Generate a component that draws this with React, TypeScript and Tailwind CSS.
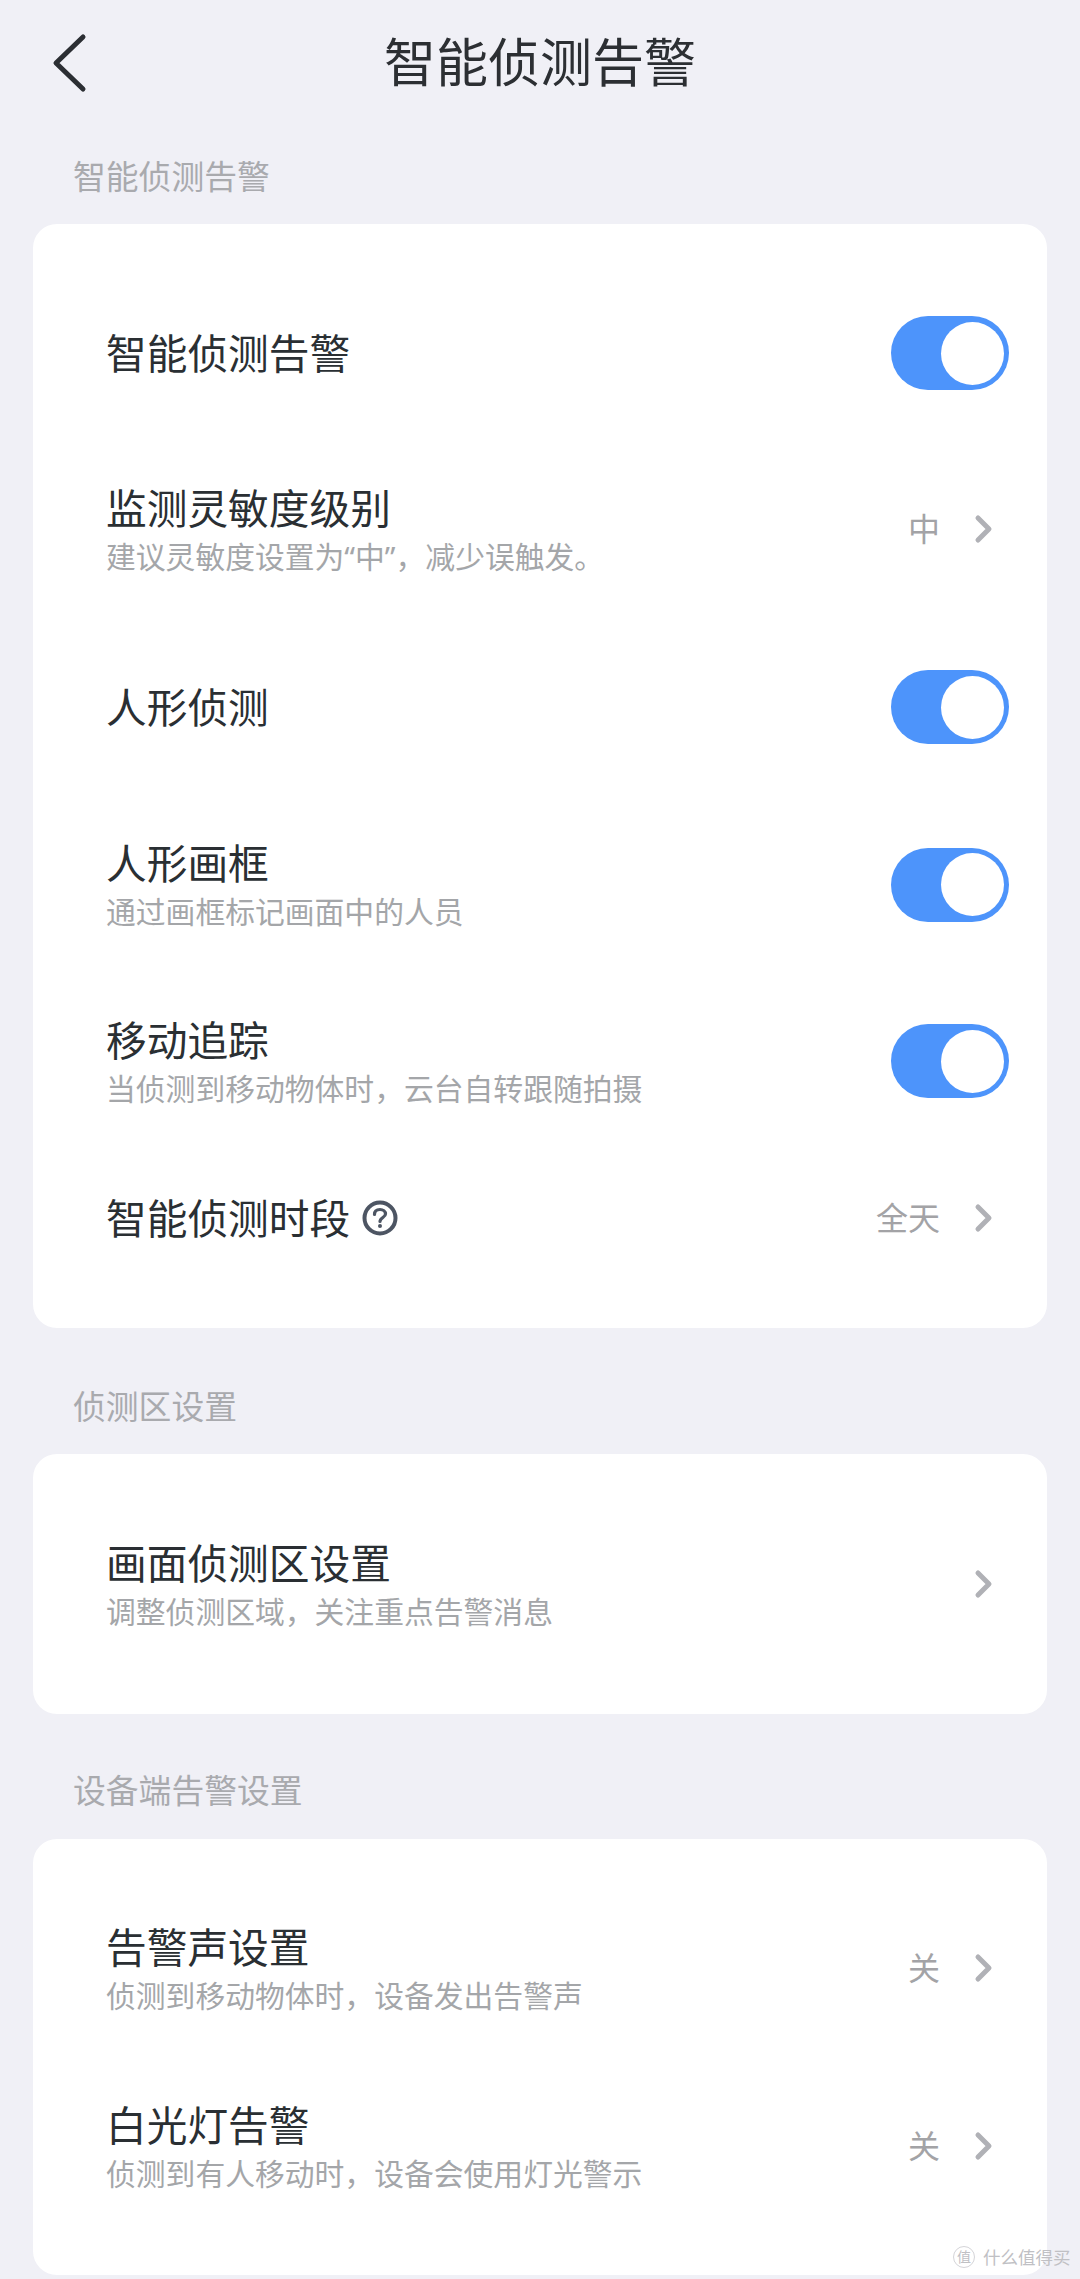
import React from "react";

const FONT = "font-['Noto_Sans','Noto_Sans_CJK_SC',sans-serif]";

function Toggle() {
	return (
		<div className="mr-[5px] flex h-[74px] w-[118px] items-center justify-end rounded-full bg-[#4d94fb] pr-[5px]">
			<div className="h-[63px] w-[63px] rounded-full bg-white" />
		</div>
	);
}

function Chevron() {
	return (
		<svg width="22" height="32" viewBox="0 0 22 32" fill="none">
			<path
				d="M5 5 L16 16 L5 27"
				stroke="#b0b1b6"
				strokeWidth="5"
				strokeLinecap="round"
				strokeLinejoin="round"
			/>
		</svg>
	);
}

function HelpIcon() {
	return (
		<svg width="36" height="36" viewBox="0 0 36 36" fill="none">
			<circle cx="18" cy="18" r="15.5" stroke="#4d5563" strokeWidth="4" />
			<path
				d="M12.5 14.5 C12.5 11 15 9.5 18 9.5 C21 9.5 23.5 11.2 23.5 14 C23.5 17.5 18 17.5 18 21.5"
				stroke="#4d5563"
				strokeWidth="3.2"
				strokeLinecap="round"
			/>
			<circle cx="18" cy="26" r="2" fill="#4d5563" />
		</svg>
	);
}

function RowText({ title, sub, help }: { title: string; sub?: string; help?: boolean }) {
	return (
		<div className={sub ? "flex flex-col pt-[3px]" : "flex flex-col"}>
			<div className="flex items-center">
				<span className="text-[40.7px] leading-[52px] text-[#2a2f33]">{title}</span>
				{help && (
					<span className="ml-[12px] flex">
						<HelpIcon />
					</span>
				)}
			</div>
			{sub && <span className="text-[29.8px] leading-[46px] text-[#a4a6a9]">{sub}</span>}
		</div>
	);
}

function Value({ text }: { text?: string }) {
	return (
		<div className="flex items-center">
			{text && <span className="text-[32px] leading-[40px] text-[#a3a3a6]">{text}</span>}
			<span className="mr-[19px] ml-[33px] flex">
				<Chevron />
			</span>
		</div>
	);
}

function Row({
	height,
	title,
	sub,
	help,
	value,
	toggle,
}: {
	height: string;
	title: string;
	sub?: string;
	help?: boolean;
	value?: string;
	toggle?: boolean;
}) {
	return (
		<div className={`flex items-center justify-between pr-[33px] pl-[73px] ${height}`}>
			<RowText title={title} sub={sub} help={help} />
			{toggle ? <Toggle /> : <Value text={value} />}
		</div>
	);
}

function SectionLabel({ text }: { text: string }) {
	return <div className="pl-[40px] text-[32.8px] leading-[48px] text-[#a9aaae]">{text}</div>;
}

export default function App() {
	return (
		<div className={`relative h-[2279px] w-[1080px] overflow-hidden bg-[#f0f0f6] ${FONT}`}>
			<header className="relative flex h-[124px] items-center justify-center">
				<svg className="absolute top-[33px] left-[50px]" width="38" height="60" viewBox="0 0 38 60" fill="none">
					<path
						d="M33 4 L6 30 L33 56"
						stroke="#2b2e33"
						strokeWidth="5"
						strokeLinecap="round"
						strokeLinejoin="round"
					/>
				</svg>
				<h1 className="text-[52px] leading-[64px] font-normal text-[#2c2f33]">智能侦测告警</h1>
			</header>

			<div className="px-[33px]">
				<div className="mt-[29px]">
					<SectionLabel text="智能侦测告警" />
				</div>
				<section className="mt-[23px] h-[1104px] rounded-[24px] bg-white pt-[41px]">
					<Row height="h-[176px]" title="智能侦测告警" toggle />
					<Row height="h-[176px]" title="监测灵敏度级别" sub="建议灵敏度设置为“中”，减少误触发。" value="中" />
					<Row height="h-[180px]" title="人形侦测" toggle />
					<Row height="h-[175px]" title="人形画框" sub="通过画框标记画面中的人员" toggle />
					<Row height="h-[178px]" title="移动追踪" sub="当侦测到移动物体时，云台自转跟随拍摄" toggle />
					<Row height="h-[136px]" title="智能侦测时段" help value="全天" />
				</section>

				<div className="mt-[55px]">
					<SectionLabel text="侦测区设置" />
				</div>
				<section className="mt-[23px] flex h-[260px] flex-col justify-center rounded-[24px] bg-white">
					<Row height="h-[177px]" title="画面侦测区设置" sub="调整侦测区域，关注重点告警消息" />
				</section>

				<div className="mt-[53px]">
					<SectionLabel text="设备端告警设置" />
				</div>
				<section className="mt-[24px] h-[436px] rounded-[24px] bg-white pt-[40px]">
					<Row height="h-[178px]" title="告警声设置" sub="侦测到移动物体时，设备发出告警声" value="关" />
					<Row height="h-[178px]" title="白光灯告警" sub="侦测到有人移动时，设备会使用灯光警示" value="关" />
				</section>
			</div>

			{/* site mark in the corner */}
			<div className="absolute top-[2246px] left-[953px] flex items-center text-[#c0c0c4]">
				<span className="flex h-[22px] w-[22px] items-center justify-center rounded-full border border-[#d4d4d8] text-[14px] leading-none">
					值
				</span>
				<span className="ml-[8px] text-[17.5px] leading-[22px] whitespace-nowrap">什么值得买</span>
			</div>
		</div>
	);
}
